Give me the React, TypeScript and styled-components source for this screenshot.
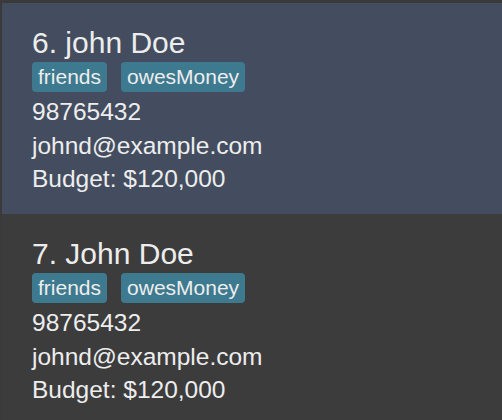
import React from "react";
import styled, { createGlobalStyle } from "styled-components";

const Global = createGlobalStyle`
  html, body { margin: 0; padding: 0; background: #3a3a3a; }
  body { font-family: "Liberation Sans", Arial, sans-serif; }
`;

const List = styled.div`
  display: flex;
  flex-direction: column;
  padding: 3px 0 0 2px;
  background: #3a3a3a;
  height: 420px;
  box-sizing: border-box;
  overflow: hidden;
`;

const Card = styled.div<{ $selected?: boolean }>`
  display: flex;
  flex-direction: column;
  align-items: flex-start;
  box-sizing: border-box;
  height: 211px;
  flex-shrink: 0;
  padding: 23px 0 0 30px;
  background: ${(p) => (p.$selected ? "#434d5f" : "#3c3c3d")};
  color: #ededed;
`;

const Title = styled.div`
  font-size: 30px;
  line-height: 34px;
  margin-bottom: 2px;
  white-space: nowrap;
`;

const Tags = styled.div`
  display: flex;
  gap: 14px;
  margin-bottom: 3px;
`;

const Tag = styled.span`
  background: #3e7a8f;
  color: #ededed;
  font-size: 21px;
  line-height: 24px;
  padding: 3px 6px;
  border-radius: 4px;
`;

const Line = styled.div`
  font-size: 24.5px;
  line-height: 33.5px;
  white-space: nowrap;
`;

const people = [
  { idx: 6, name: "john Doe", selected: true },
  { idx: 7, name: "John Doe", selected: false },
];

export default function App() {
  return (
    <>
      <Global />
      <List>
        {people.map((p) => (
          <Card key={p.idx} $selected={p.selected}>
            <Title>
              {p.idx}. {p.name}
            </Title>
            <Tags>
              <Tag>friends</Tag>
              <Tag>owesMoney</Tag>
            </Tags>
            <Line>98765432</Line>
            <Line>johnd@example.com</Line>
            <Line>Budget: $120,000</Line>
          </Card>
        ))}
      </List>
    </>
  );
}
